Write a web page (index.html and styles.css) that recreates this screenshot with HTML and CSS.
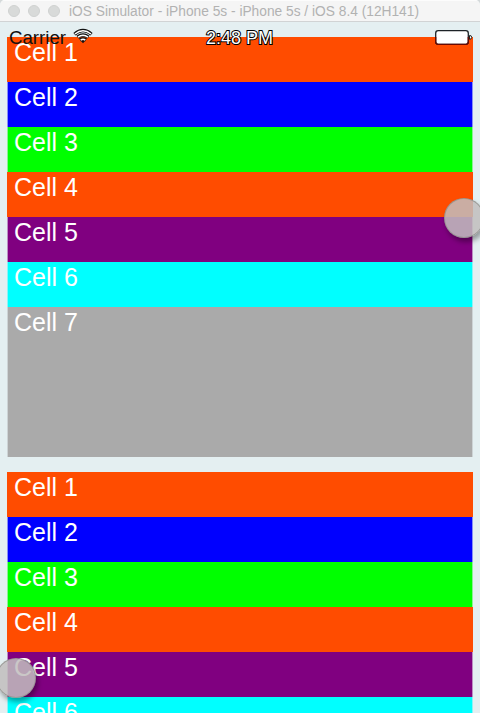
FILE: index.html
```html
<!DOCTYPE html>
<html lang="en">
<head>
<meta charset="utf-8">
<title>iOS Simulator</title>
<link rel="stylesheet" href="styles.css">
</head>
<body>
<div class="window">
  <header class="titlebar">
    <i class="light"></i><i class="light"></i><i class="light"></i>
    <svg class="title" width="354" height="20"><text x="0" y="15" textLength="350" lengthAdjust="spacingAndGlyphs">iOS Simulator - iPhone 5s - iPhone 5s / iOS 8.4 (12H141)</text></svg>
  </header>
  <main class="screen">
    <section class="group">
      <div class="cell orange"><span>Cell 1</span></div>
      <div class="cell blue"><span>Cell 2</span></div>
      <div class="cell green"><span>Cell 3</span></div>
      <div class="cell orange"><span>Cell 4</span></div>
      <div class="cell purple"><span>Cell 5</span></div>
      <div class="cell cyan"><span>Cell 6</span></div>
      <div class="cell gray tall"><span>Cell 7</span></div>
    </section>
    <section class="group">
      <div class="cell orange"><span>Cell 1</span></div>
      <div class="cell blue"><span>Cell 2</span></div>
      <div class="cell green"><span>Cell 3</span></div>
      <div class="cell orange"><span>Cell 4</span></div>
      <div class="cell purple"><span>Cell 5</span></div>
      <div class="cell cyan"><span>Cell 6</span></div>
    </section>
  </main>
  <svg class="status" width="480" height="26" viewBox="0 22 480 26">
    <text class="carrier" x="9" y="43.5" textLength="57" lengthAdjust="spacingAndGlyphs">Carrier</text>
    <g fill="none">
      <path stroke="#111" stroke-width="3.4" d="M74.500 34.200Q83 27 91.500 34.200M77.500 37.200Q83 33 88.500 37.200M80 40Q83 38 86 40"/>
      <path stroke="#fff" stroke-width="1.600" d="M75 34Q83 27.500 91 34M78 37.200Q83 33.300 88 37.200M80.700 40Q83 38.500 85.300 40"/>
    </g>
    <path d="M81 41H85L83 43.300Z" fill="#111"/>
    <text class="time" x="206" y="43.500" textLength="67" lengthAdjust="spacingAndGlyphs">2:48 PM</text>
    <rect x="435.700" y="30.700" width="32.600" height="13.600" rx="2.500" fill="#fff" stroke="#1c2226" stroke-width="1.300"/>
    <path d="M435.700 37V41.800Q435.700 44.300 438.200 44.300H465.800Q468.300 44.300 468.300 41.800V37" fill="none" stroke="#6b0800" stroke-width="1.300"/>
    <path d="M469.500 35.500Q471.700 35.300 471.700 37.300T469.500 39.300Z" fill="#fff" stroke="#222" stroke-width="1"/>
  </svg>
  <div class="touch touch-right"></div>
  <div class="touch touch-left"></div>
</div>
</body>
</html>
```

FILE: styles.css
```css
* { box-sizing: border-box; }
html, body { margin: 0; height: 100%; overflow: hidden; }
body { background: #d5d9da; font-family: "Liberation Sans", Arial, sans-serif; }
.window {
  position: relative;
  height: 713px;
  overflow: hidden;
  background: #e4eff1;
  border-radius: 5px 5px 0 0;
}
.titlebar {
  display: flex;
  align-items: center;
  gap: 8px;
  height: 22px;
  padding-left: 8px;
  background: #f5f5f5;
  border-top: 1px solid #fcfcfc;
  border-bottom: 1px solid #d1d3d4;
}
.light { width: 12px; height: 12px; border-radius: 50%; background: #d8dad9; border: 1px solid #cfd1d0; }
.title { margin-left: 1px; font-size: 14px; fill: #b2b2b2; }
.screen {
  display: flex;
  flex-direction: column;
  gap: 15px;
  padding: 15px 7px 0;
}
.cell {
  height: 45px;
  padding: 0 0 0 6px;
  border: solid rgba(228, 239, 241, .6);
  border-width: 0 1px;
  color: #fff;
  font-size: 25px;
  line-height: 30px;
}
.cell span { display: block; }
.orange { background: #ff4c00; border-color: #ff4c00; }
.blue { background: #0000ff; }
.green { background: #00ff00; }
.purple { background: #800080; }
.cyan { background: #00ffff; }
.gray { background: #aaa; }
.tall { height: 150px; }
.status { position: absolute; left: 0; top: 22px; }
.carrier { font-size: 18px; fill: #111; }
.time { font-size: 18px; fill: #fff; stroke: #000; stroke-width: 2px; paint-order: stroke; }
.touch {
  position: absolute;
  width: 40px;
  height: 40px;
  border-radius: 50%;
  background: rgba(193, 190, 190, .86);
  border: 1px solid rgba(145, 145, 140, .8);
  box-shadow: 2px 4px 5px rgba(0, 0, 0, .35);
}
.touch-right { left: 444px; top: 198px; }
.touch-left { left: -4px; top: 658px; }
```
